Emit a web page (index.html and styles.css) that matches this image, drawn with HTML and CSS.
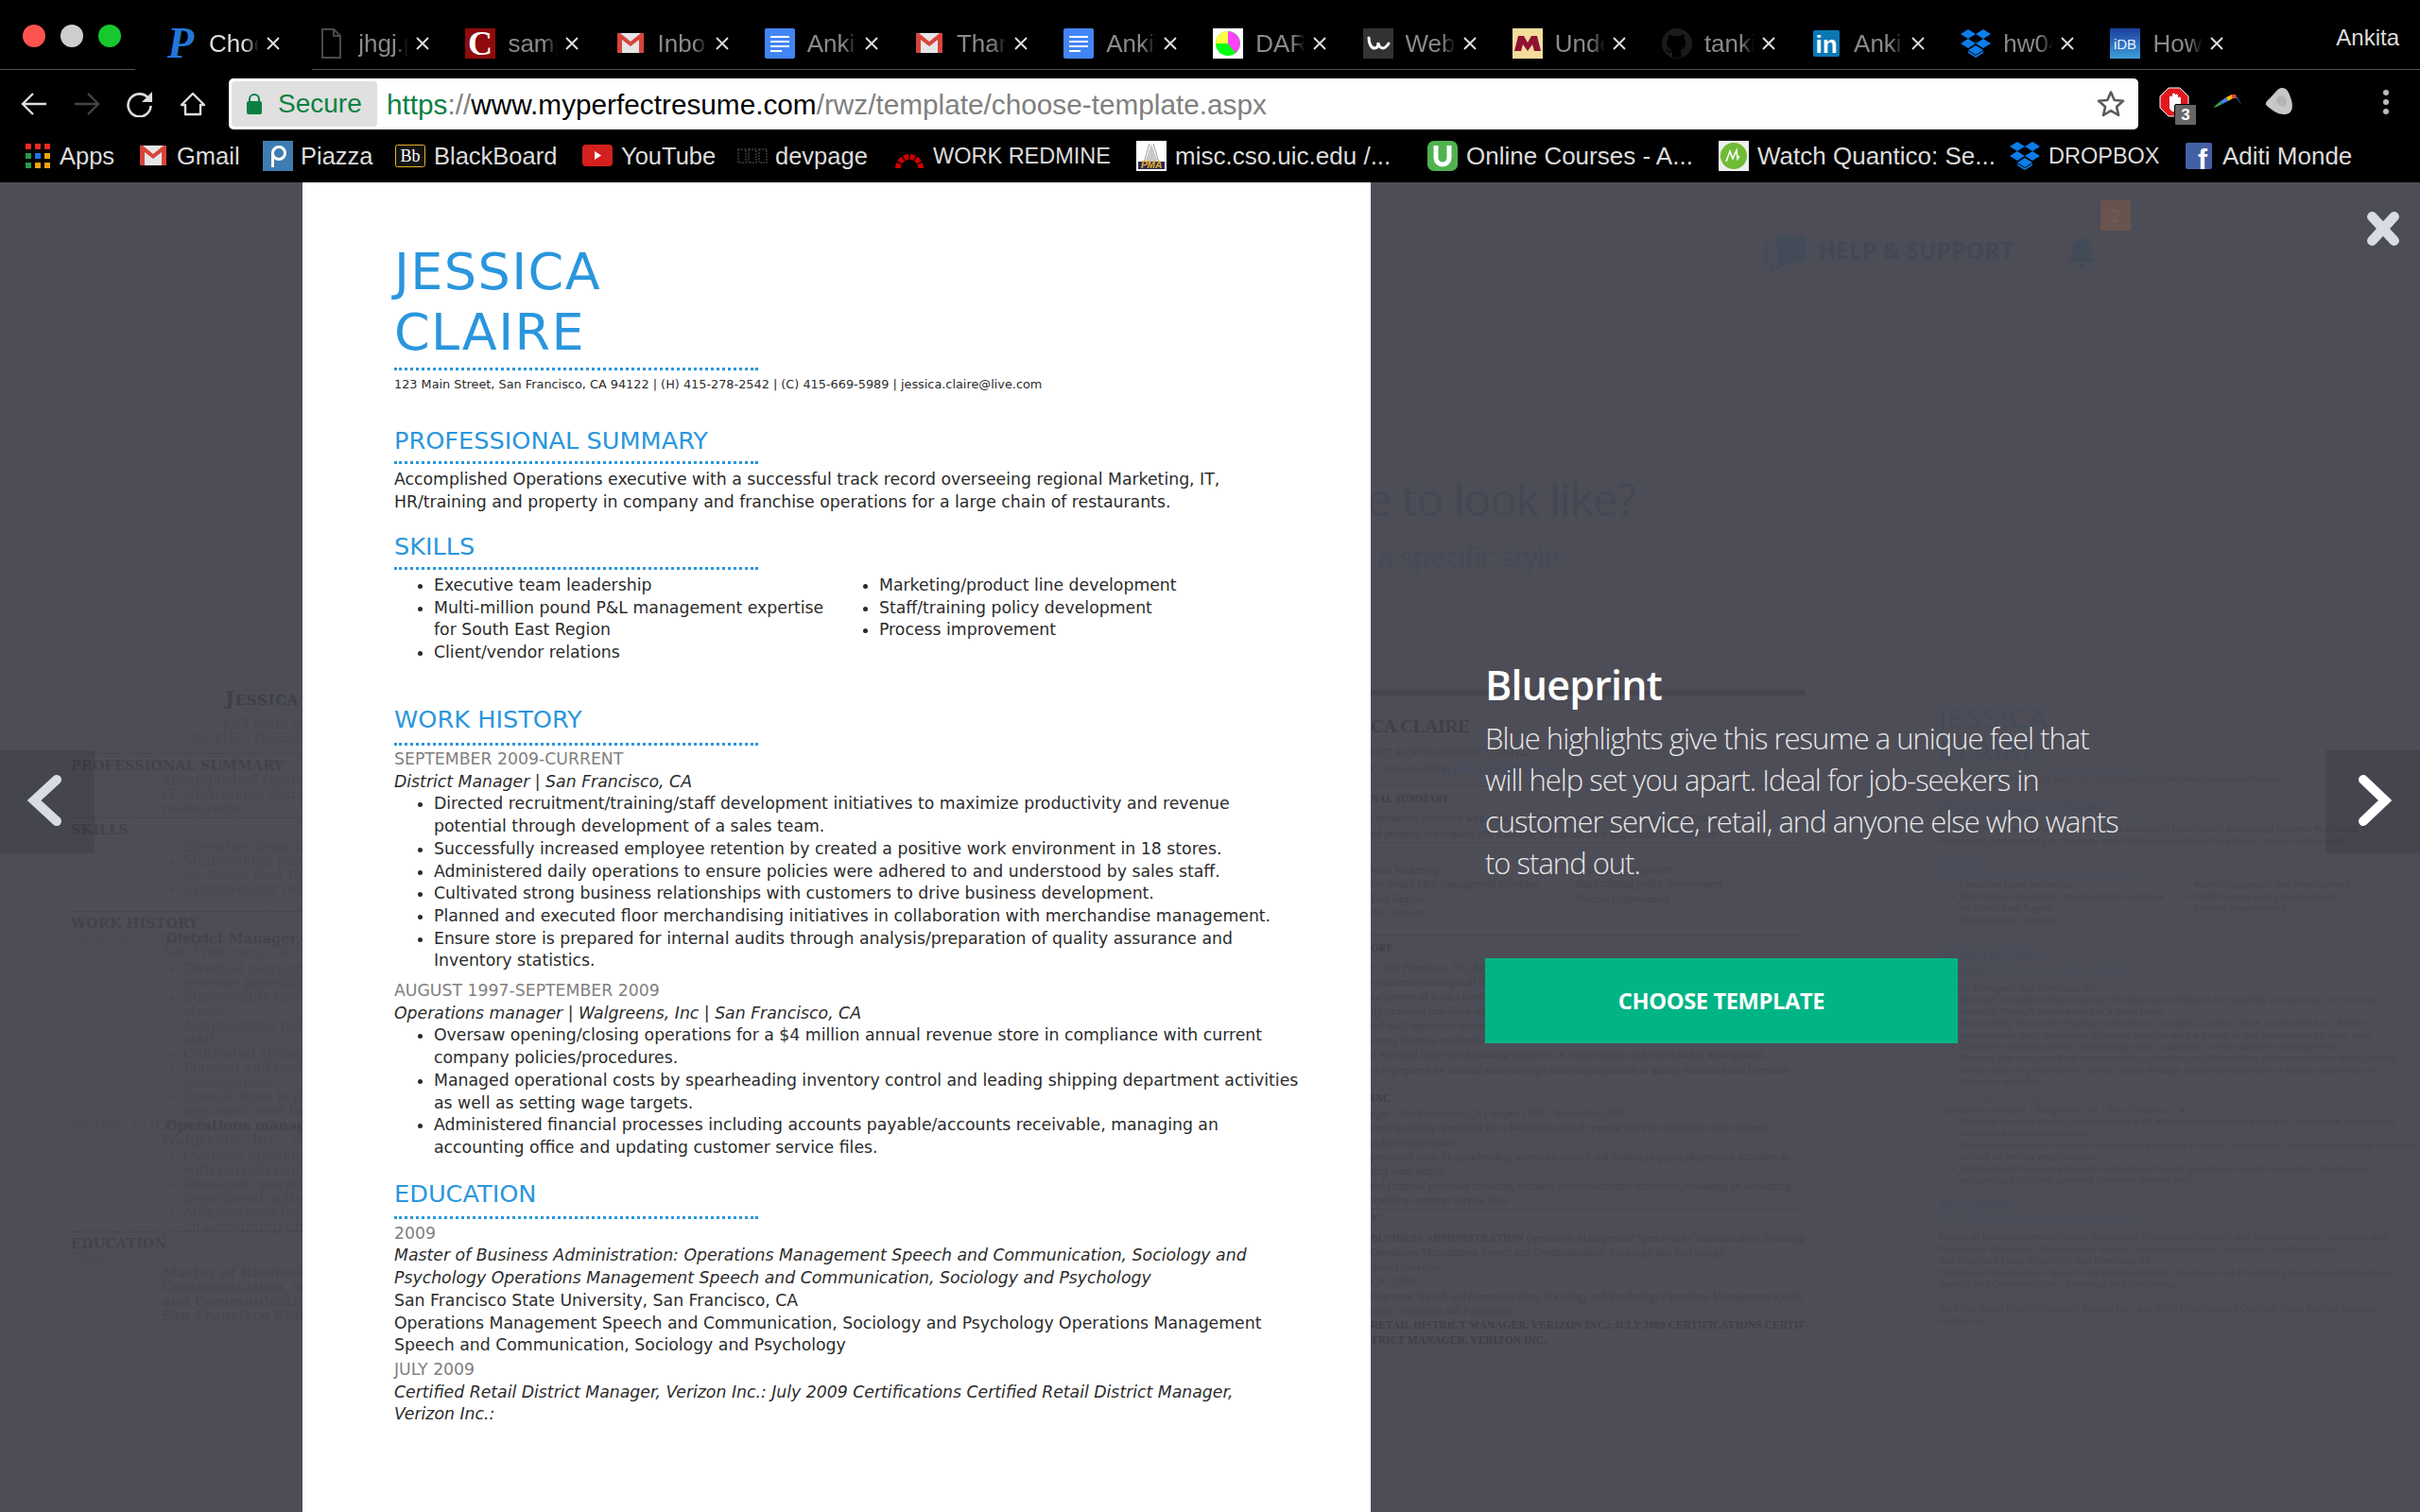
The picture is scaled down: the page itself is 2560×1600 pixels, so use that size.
FILE: index.html
```html
<!DOCTYPE html>
<html lang="en">
<head>
<meta charset="utf-8">
<title>Choose template</title>
<link rel="stylesheet" href="styles.css">
</head>
<body>
<svg class="defs" width="0" height="0" aria-hidden="true">
  <symbol id="i-gmail" viewBox="0 0 32 32">
    <rect x="2" y="5" width="28" height="21" rx="2" fill="#e6e6e6"/>
    <path d="M2 7a2 2 0 0 1 3-2l11 9 11-9a2 2 0 0 1 3 2v17a2 2 0 0 1-2 2h-3V12l-9 7-9-7v14H4a2 2 0 0 1-2-2z" fill="#d8443a"/>
  </symbol>
  <symbol id="i-docs" viewBox="0 0 32 32">
    <rect width="32" height="32" rx="2" fill="#4285f4"/>
    <path d="M6 8h20v2H6zM6 13h20v2H6zM6 18h20v2H6zM6 23h12v2H6z" fill="#fff"/>
  </symbol>
  <symbol id="i-dropbox" viewBox="0 0 32 32">
    <path d="M8 1l8 5-8 5-8-5zM24 1l8 5-8 5-8-5zM8 11l8 5-8 5-8-5zM24 11l8 5-8 5-8-5zM8 23l8-5 8 5-8 5z" fill="#0d7de8"/>
    <path d="M16 31l-8-5v-2l8 5 8-5v2z" fill="#0d7de8"/>
  </symbol>
  <symbol id="i-x" viewBox="0 0 16 16">
    <path d="M2 2l12 12M14 2L2 14" stroke="currentColor" stroke-width="1.8" fill="none"/>
  </symbol>
</svg>

<header class="chrome">
  <div class="tabstrip">
    <div class="lights"><i class="light red"></i><i class="light grey"></i><i class="light green"></i></div>
    <div class="tabs">
      <div class="tab active">
        <svg class="fav" viewBox="0 0 32 32"><text x="15" y="31" text-anchor="middle" class="fav-p">P</text></svg>
        <span class="tab-title">Choose</span><svg class="tab-x"><use href="#i-x"/></svg>
      </div>
      <div class="tab">
        <svg class="fav" viewBox="0 0 32 32"><path d="M7 1h12l7 7v23H7z M19 1v7h7" fill="none" stroke="#4a4a4a" stroke-width="2"/></svg>
        <span class="tab-title">jhgj.pdf</span><svg class="tab-x"><use href="#i-x"/></svg>
      </div>
      <div class="tab">
        <svg class="fav" viewBox="0 0 32 32"><rect width="32" height="32" fill="#8f0b0b"/><text x="16" y="28" text-anchor="middle" class="fav-c">C</text></svg>
        <span class="tab-title">sample</span><svg class="tab-x"><use href="#i-x"/></svg>
      </div>
      <div class="tab">
        <svg class="fav"><use href="#i-gmail"/></svg>
        <span class="tab-title">Inbox</span><svg class="tab-x"><use href="#i-x"/></svg>
      </div>
      <div class="tab">
        <svg class="fav"><use href="#i-docs"/></svg>
        <span class="tab-title">Ankita</span><svg class="tab-x"><use href="#i-x"/></svg>
      </div>
      <div class="tab">
        <svg class="fav"><use href="#i-gmail"/></svg>
        <span class="tab-title">Thank</span><svg class="tab-x"><use href="#i-x"/></svg>
      </div>
      <div class="tab">
        <svg class="fav"><use href="#i-docs"/></svg>
        <span class="tab-title">Ankita</span><svg class="tab-x"><use href="#i-x"/></svg>
      </div>
      <div class="tab">
        <svg class="fav" viewBox="0 0 32 32"><rect width="32" height="32" fill="#fff"/><circle cx="16" cy="16" r="13" fill="#00ff10"/><path d="M16 16V3A13 13 0 0 0 3 16z" fill="#ffff40"/><path d="M16 16V3a13 13 0 0 1 8 23z" fill="#ff40ff"/></svg>
        <span class="tab-title">DARwin</span><svg class="tab-x"><use href="#i-x"/></svg>
      </div>
      <div class="tab">
        <svg class="fav" viewBox="0 0 32 32"><rect width="32" height="32" fill="#333"/><path d="M6 10c0 7 3 11 6 11s4-3 4-6c0 3 2 6 5 6 2 0 4-2 6-5" fill="none" stroke="#fff" stroke-width="3" stroke-linecap="round"/></svg>
        <span class="tab-title">Web</span><svg class="tab-x"><use href="#i-x"/></svg>
      </div>
      <div class="tab">
        <svg class="fav" viewBox="0 0 32 32"><rect width="32" height="32" fill="#f3dc9c"/><path d="M2 24l4-16h6l4 7 4-7h6l4 16h-7l-2-7-5 7-5-7-2 7z" fill="#8f1233"/></svg>
        <span class="tab-title">Under</span><svg class="tab-x"><use href="#i-x"/></svg>
      </div>
      <div class="tab">
        <svg class="fav" viewBox="0 0 32 32"><circle cx="16" cy="16" r="16" fill="#1b1b1b"/><path d="M11 31v-6c-4 1-6-1-7-3 2 0 3 2 4 2 1 0 2 0 3-1-4-1-6-4-6-8 0-2 1-3 2-4-.5-1.500-.5-3 .2-4.500 1.500 0 3 1 4 1.800 3-.8 5-.8 8 0 1-.8 2.500-1.800 4-1.800.7 1.500.7 3 .2 4.500 1 1 2 2 2 4 0 4-2 7-6 8 1 1 1 2 1 3v5z" fill="#000"/></svg>
        <span class="tab-title">tankita</span><svg class="tab-x"><use href="#i-x"/></svg>
      </div>
      <div class="tab">
        <svg class="fav" viewBox="0 0 32 32"><rect x="2" y="2" width="28" height="28" rx="2" fill="#0a78b5"/><text x="16" y="26" text-anchor="middle" class="fav-in">in</text></svg>
        <span class="tab-title">Ankita</span><svg class="tab-x"><use href="#i-x"/></svg>
      </div>
      <div class="tab">
        <svg class="fav"><use href="#i-dropbox"/></svg>
        <span class="tab-title">hw04</span><svg class="tab-x"><use href="#i-x"/></svg>
      </div>
      <div class="tab">
        <svg class="fav" viewBox="0 0 32 32"><defs><linearGradient id="g-idb" x1="0" y1="0" x2="0" y2="1"><stop offset="0" stop-color="#1d3f9e"/><stop offset="1" stop-color="#3d9fd8"/></linearGradient></defs><rect width="32" height="32" fill="url(#g-idb)"/><text x="16" y="22" text-anchor="middle" class="fav-idb">iDB</text></svg>
        <span class="tab-title">How</span><svg class="tab-x"><use href="#i-x"/></svg>
      </div>
    </div>
    <span class="profile">Ankita</span>
  </div>

  <div class="toolbar">
    <div class="nav">
      <svg class="nav-i" viewBox="0 0 28 28"><path d="M27 14H3M13 3L2 14l11 11" fill="none" stroke="#ddd" stroke-width="2.400"/></svg>
      <svg class="nav-i" viewBox="0 0 28 28"><path d="M1 14h24M15 3l11 11-11 11" fill="none" stroke="#444" stroke-width="2.400"/></svg>
      <svg class="nav-i" viewBox="0 0 28 28"><path d="M23 8a12 12 0 1 0 2.500 8" fill="none" stroke="#ddd" stroke-width="2.600"/><path d="M27 1v11H16z" fill="#ddd"/></svg>
      <svg class="nav-i" viewBox="0 0 28 28"><path d="M14 3L2 15h4v10h16V15h4z" fill="none" stroke="#ddd" stroke-width="2.400" stroke-linejoin="round"/></svg>
    </div>
    <div class="omnibox">
      <div class="secure">
        <svg class="lock" viewBox="0 0 16 22"><path d="M3 9V6a5 5 0 0 1 10 0v3" fill="none" stroke="#0b8043" stroke-width="2"/><rect y="8" width="16" height="14" rx="2" fill="#0b8043"/></svg>
        <span>Secure</span>
      </div>
      <div class="url"><span class="u-green">https</span><span class="u-grey">://</span><span class="u-host">www.myperfectresume.com</span><span class="u-grey">/rwz/template/choose-template.aspx</span></div>
      <svg class="star" viewBox="0 0 30 30"><path d="M15 2.500l3.700 8.500 9.300.8-7 6.100 2.100 9.100-8.100-4.800-8 4.800 2.100-9.100-7-6.100 9.200-.8z" fill="none" stroke="#5a5a5a" stroke-width="2.600" stroke-linejoin="round"/></svg>
    </div>
    <div class="exts">
      <div class="ext-stop">
        <svg class="ext-stop-i" viewBox="0 0 32 32"><path d="M10 1h12l9 9v12l-9 9H10l-9-9V10z" fill="#e0191f" stroke="#fff" stroke-width="1"/><path d="M11 23V11a1.500 1.500 0 0 1 3 0V8a1.500 1.500 0 0 1 3 0v1a1.500 1.500 0 0 1 3 0v3a1.500 1.500 0 0 1 3 0v9l-3 5h-6z" fill="#fff"/></svg>
        <span class="ext-badge">3</span>
      </div>
      <svg class="ext-boom" viewBox="0 0 32 16"><path d="M1 15l8-7 2 3-6 3z" fill="#34a853"/><path d="M9 8l6-4 2 4-6 3z" fill="#4285f4"/><path d="M15 4l6-3 1 4-5 3z" fill="#fbbc05"/><path d="M21 1h4l1 4h-4z" fill="#ea4335"/><path d="M25 1l7 12-6-8z" fill="#1a6fb0"/></svg>
      <svg class="ext-blob" viewBox="0 0 30 30"><path d="M17 1c5 0 7 4 9 10 3 8 3 17-5 18-8 1-15-5-20-9-2-2-1-4 1-6C8 9 12 1 17 1z" fill="#c8c8c8"/><path d="M16 9c4 0 6 4 6 8s-3 5-6 3-5-3-5-5 2-6 5-6z" fill="#b4b4b4"/></svg>
      <div class="menu"><i></i><i></i><i></i></div>
    </div>
  </div>

  <nav class="bookmarks">
    <a class="bm bm-apps">
      <span class="apps-grid"><i class="c-r"></i><i class="c-r"></i><i class="c-r"></i><i class="c-g"></i><i class="c-b"></i><i class="c-y"></i><i class="c-g"></i><i class="c-y"></i><i class="c-y"></i></span>
      Apps</a>
    <a class="bm bm-gmail"><svg class="bm-i bm-i-gm"><use href="#i-gmail"/></svg>Gmail</a>
    <a class="bm bm-piazza"><svg class="bm-i" viewBox="0 0 32 32"><rect width="32" height="32" fill="#3e7cb1"/><circle cx="17" cy="13" r="6.500" fill="none" stroke="#fff" stroke-width="3"/><path d="M10.500 13v15" stroke="#fff" stroke-width="3"/></svg>Piazza</a>
    <a class="bm bm-bb"><svg class="bm-i bm-i-bb" viewBox="0 0 32 24"><rect x=".5" y=".5" width="31" height="23" rx="2" fill="#111" stroke="#e8b02c"/><text x="16" y="18" text-anchor="middle" class="fav-bb">Bb</text></svg>BlackBoard</a>
    <a class="bm bm-yt"><svg class="bm-i bm-i-yt" viewBox="0 0 32 24"><rect width="32" height="23" rx="4" fill="#d4201f"/><path d="M13 7l7 4.500-7 4.500z" fill="#fff"/></svg>YouTube</a>
    <a class="bm bm-dev"><svg class="bm-i bm-i-bb" viewBox="0 0 32 16"><g fill="none" stroke="#2e2e2e" stroke-width="2" stroke-dasharray="2 1"><rect x="1" y="1" width="8" height="14"/><rect x="12" y="1" width="8" height="14"/><rect x="23" y="1" width="8" height="14"/></g></svg>devpage</a>
    <a class="bm bm-caps bm-work"><svg class="bm-i" viewBox="0 0 32 26"><path d="M4 26a12 12 0 0 1 24 0" fill="none" stroke="#c00" stroke-width="6" stroke-dasharray="5 1.500"/></svg>WORK REDMINE</a>
    <a class="bm bm-long"><svg class="bm-i" viewBox="0 0 32 32"><rect width="32" height="32" fill="#fff"/><path d="M16 3l7 20H9z" fill="#c8c8c8"/><path d="M14 3l-6 20M18 3l6 20" stroke="#9c9c9c"/><rect x="2" y="22" width="28" height="8" fill="#2a2a55"/><text x="16" y="29" text-anchor="middle" class="fav-pma">PMA</text></svg>misc.cso.uic.edu /...</a>
    <a class="bm bm-long"><svg class="bm-i" viewBox="0 0 32 32"><rect width="32" height="32" rx="7" fill="#4fb24f"/><path d="M9 5v13a7 7 0 0 0 14 0V5" fill="none" stroke="#fff" stroke-width="5"/></svg>Online Courses - A...</a>
    <a class="bm bm-long"><svg class="bm-i" viewBox="0 0 32 32"><rect width="32" height="32" fill="#efefef"/><circle cx="16" cy="16" r="14" fill="#6fbb36"/><path d="M8 22l4-11 3 8 4-9 1 9 2-3" fill="none" stroke="#fff" stroke-width="1.600"/></svg>Watch Quantico: Se...</a>
    <a class="bm bm-caps bm-drop"><svg class="bm-i"><use href="#i-dropbox"/></svg>DROPBOX</a>
    <a class="bm bm-aditi"><svg class="bm-i bm-i-f" viewBox="0 0 28 28"><rect width="28" height="28" rx="2" fill="#4460a5"/><text x="18" y="28" text-anchor="middle" class="fav-f">f</text></svg>Aditi Monde</a>
  </nav>
</header>

<main class="stage">
  <!-- dim page behind the modal -->
  <div class="ghost-top">
    <svg class="g-chat" viewBox="0 0 42 40"><path d="M12 4a4 4 0 0 1 4-4h22a4 4 0 0 1 4 4v20a4 4 0 0 1-4 4H24L14 36V24z" fill="#444b58"/><path d="M8 10H2v20h6v8l10-8" fill="none" stroke="#444b58" stroke-width="2"/></svg>
    <span class="g-help">HELP &amp; SUPPORT</span>
    <svg class="g-bell" viewBox="0 0 32 32"><path d="M16 0c2 0 3 1 3 3 6 2 7 7 7 13 0 5 3 8 5 10H1c2-2 5-5 5-10C6 10 7 5 13 3c0-2 1-3 3-3zM12 28h8c0 2-2 4-4 4s-4-2-4-4z" fill="#434a58"/></svg>
    <span class="g-badge">2</span>
  </div>
  <div class="ghost-rule"></div>
  <div class="ghost-title">What do you want your resume to look like?</div>
  <div class="ghost-sub">Don't worry, you can pick a specific style.</div>

  <section class="slide-left">
    <div class="sl-name">Jessica Claire</div>
    <div class="sl-line sl-addr1">123 Main Street, San Francisco</div>
    <div class="sl-line sl-addr2">H: 415-278-2542 C: 415-669-5989</div>
    <div class="sl-rule sl-rule-first"></div>
    <div class="sl-h">PROFESSIONAL SUMMARY</div>
    <div class="sl-line sl-body">Accomplished Operations executive with</div>
    <div class="sl-line sl-body">IT, HR/training and property in company</div>
    <div class="sl-line sl-body">restaurants.</div>
    <div class="sl-rule"></div>
    <div class="sl-h">SKILLS</div>
    <ul class="sl-list">
      <li>Executive team leadership</li>
      <li>Multi-million pound P&amp;L management<br>for South East Region</li>
      <li>Client/vendor relations</li>
    </ul>
    <div class="sl-rule sl-rule-gap"></div>
    <div class="sl-h">WORK HISTORY</div>
    <div class="sl-row"><span class="sl-date">09/2009 to Current</span><b>District Manager,</b></div>
    <div class="sl-line sl-body"><em>San Francisco, CA</em></div>
    <ul class="sl-list">
      <li>Directed recruitment/training/staff<br>revenue potential through development</li>
      <li>Successfully increased employee retention<br>stores.</li>
      <li>Administered daily operations to ensure<br>staff.</li>
      <li>Cultivated strong business relationships</li>
      <li>Planned and executed floor merchandising<br>management.</li>
      <li>Ensure store is prepared for internal<br>assurance and Inventory statistics.</li>
    </ul>
    <div class="sl-row"><span class="sl-date">08/1997 to 09/2009</span><b>Operations manager,</b></div>
    <div class="sl-line sl-body"><b>Walgreens, Inc</b> – <em>San Francisco, CA</em></div>
    <ul class="sl-list">
      <li>Oversaw opening/closing operations for<br>with current company policies</li>
      <li>Managed operational costs by spearheading<br>department activities as well as setting</li>
      <li>Administered financial processes including<br>an accounting office and updating customer</li>
    </ul>
    <div class="sl-rule sl-rule-edu"></div>
    <div class="sl-h">EDUCATION</div>
    <div class="sl-row"><span class="sl-date">2009</span></div>
    <div class="sl-line sl-body"><b>Master of Business Administration</b></div>
    <div class="sl-line sl-body"><b>Communication, Sociology and</b></div>
    <div class="sl-line sl-body"><b>and Communication, Sociology</b></div>
    <div class="sl-line sl-body"><b><em>San Francisco State University</em></b></div>
  </section>

  <section class="slide-mid">
    <div class="top-bar"></div>
    <div class="m-name">CA CLAIRE</div>
    <div class="m-line m-gap">EET, SAN FRANCISCO, CA 94122</div>
    <div class="m-line m-gap2">C: 415-669-5989 | <span class="m-blue">jessica.claire@live.com</span></div>
    <div class="m-rule"></div>
    <div class="m-line m-bi">NAL SUMMARY</div>
    <div class="m-line m-gap3">Operations executive with a successful track record overseeing regional Marketing</div>
    <div class="m-line">nd property in company and franchise operations for a large chain of restaurants.</div>
    <div class="m-rule m-rule-tight"></div>
    <div class="m-cols">
      <div class="m-line">team leadership</div><div class="m-line m-c2">duct line development</div>
      <div class="m-line">ion pound P&amp;L management expertise</div><div class="m-line m-c2">Staff/training policy development</div>
      <div class="m-line">East Region</div><div class="m-line m-c2">Process improvement</div>
      <div class="m-line">dor relations</div><div class="m-line"></div>
    </div>
    <div class="m-rule m-rule-gap"></div>
    <div class="m-line m-bi">ORY</div>
    <div class="m-line m-gap3"><em>r | San Francisco, CA | September 2009 - Current</em></div>
    <div class="m-line">ecruitment/training/staff d</div>
    <div class="m-line">velopment of a sales team</div>
    <div class="m-line">lly increased employee rete</div>
    <div class="m-line">red daily operations to ens</div>
    <div class="m-line">strong business relationsh</div>
    <div class="m-line">d executed floor merchandising initiatives in collaboration with merchandise management.</div>
    <div class="m-line">re is prepared for internal audits through analysis/preparation of quality assurance and Inventory</div>
    <div class="m-line">&nbsp;</div>
    <div class="m-line m-b">INC</div>
    <div class="m-line"><em>ager | San Francisco, CA | August 1997 - September 2009</em></div>
    <div class="m-line">pening/closing operations for a $4 million annual revenue store in compliance with current</div>
    <div class="m-line">policies/procedures.</div>
    <div class="m-line">perational costs by spearheading inventory control and leading shipping department activities as</div>
    <div class="m-line">ting wage targets.</div>
    <div class="m-line">red financial processes including accounts payable/accounts receivable, managing an accounting</div>
    <div class="m-line">updating customer service files.</div>
    <div class="m-rule m-rule-hair"></div>
    <div class="m-line m-bi">Y</div>
    <div class="m-line m-gap3"><b>BUSINESS ADMINISTRATION</b> Operations Management Speech and Communication, Sociology</div>
    <div class="m-line">Operations Management Speech and Communication, Sociology and Psychology</div>
    <div class="m-line">State University</div>
    <div class="m-line">CA / 2009</div>
    <div class="m-line">nagement Speech and Communication, Sociology and Psychology Operations Management Speech</div>
    <div class="m-line">ation, Sociology and Psychology</div>
    <div class="m-line m-b">RETAIL DISTRICT MANAGER, VERIZON INC.; JULY 2009 CERTIFICATIONS CERTIFIED</div>
    <div class="m-line m-b">TRICT MANAGER, VERIZON INC.</div>
  </section>

  <section class="slide-right" aria-hidden="true">
    <div class="resume">
      <h1 class="r-name">JESSICA<br>CLAIRE</h1>
      <p class="r-contact">123 Main Street, San Francisco, CA 94122 | (H) 415-278-2542 | (C) 415-669-5989 | jessica.claire@live.com</p>
      <h2 class="r-h r-h-summary">PROFESSIONAL SUMMARY</h2>
      <p class="r-p">Accomplished Operations executive with a successful track record overseeing regional Marketing, IT, HR/training and property in company and franchise operations for a large chain of restaurants.</p>
      <h2 class="r-h r-h-skills">SKILLS</h2>
      <div class="r-skills">
        <ul class="r-ul"><li>Executive team leadership</li><li>Multi-million pound P&amp;L management expertise for South East Region</li><li>Client/vendor relations</li></ul>
        <ul class="r-ul"><li>Marketing/product line development</li><li>Staff/training policy development</li><li>Process improvement</li></ul>
      </div>
      <h2 class="r-h r-h-work">WORK HISTORY</h2>
      <p class="r-date">SEPTEMBER 2009-CURRENT</p>
      <p class="r-p r-it">District Manager | San Francisco, CA</p>
      <ul class="r-ul"><li>Directed recruitment/training/staff development initiatives to maximize productivity and revenue potential through development of a sales team.</li><li>Successfully increased employee retention by created a positive work environment in 18 stores.</li><li>Administered daily operations to ensure policies were adhered to and understood by sales staff.</li><li>Cultivated strong business relationships with customers to drive business development.</li><li>Planned and executed floor merchandising initiatives in collaboration with merchandise management.</li><li>Ensure store is prepared for internal audits through analysis/preparation of quality assurance and Inventory statistics.</li></ul>
      <p class="r-date r-date-gap">AUGUST 1997-SEPTEMBER 2009</p>
      <p class="r-p r-it">Operations manager | Walgreens, Inc | San Francisco, CA</p>
      <ul class="r-ul"><li>Oversaw opening/closing operations for a $4 million annual revenue store in compliance with current company policies/procedures.</li><li>Managed operational costs by spearheading inventory control and leading shipping department activities as well as setting wage targets.</li><li>Administered financial processes including accounts payable/accounts receivable, managing an accounting office and updating customer service files.</li></ul>
      <h2 class="r-h r-h-edu">EDUCATION</h2>
      <p class="r-date">2009</p>
      <p class="r-p r-it">Master of Business Administration: Operations Management Speech and Communication, Sociology and Psychology Operations Management Speech and Communication, Sociology and Psychology</p>
      <p class="r-p">San Francisco State University, San Francisco, CA</p>
      <p class="r-p">Operations Management Speech and Communication, Sociology and Psychology Operations Management Speech and Communication, Sociology and Psychology</p>
      <p class="r-date r-date-edu">JULY 2009</p>
      <p class="r-p r-it r-cert">Certified Retail District Manager, Verizon Inc.: July 2009 Certifications Certified Retail District Manager, Verizon Inc.:</p>
    </div>
  </section>

  <!-- modal -->
  <article class="sheet">
    <div class="resume">
      <h1 class="r-name">JESSICA<br>CLAIRE</h1>
      <p class="r-contact">123 Main Street, San Francisco, CA 94122 | (H) 415-278-2542 | (C) 415-669-5989 | jessica.claire@live.com</p>
      <h2 class="r-h r-h-summary">PROFESSIONAL SUMMARY</h2>
      <p class="r-p">Accomplished Operations executive with a successful track record overseeing regional Marketing, IT, HR/training and property in company and franchise operations for a large chain of restaurants.</p>
      <h2 class="r-h r-h-skills">SKILLS</h2>
      <div class="r-skills">
        <ul class="r-ul"><li>Executive team leadership</li><li>Multi-million pound P&amp;L management expertise for South East Region</li><li>Client/vendor relations</li></ul>
        <ul class="r-ul"><li>Marketing/product line development</li><li>Staff/training policy development</li><li>Process improvement</li></ul>
      </div>
      <h2 class="r-h r-h-work">WORK HISTORY</h2>
      <p class="r-date">SEPTEMBER 2009-CURRENT</p>
      <p class="r-p r-it">District Manager | San Francisco, CA</p>
      <ul class="r-ul"><li>Directed recruitment/training/staff development initiatives to maximize productivity and revenue potential through development of a sales team.</li><li>Successfully increased employee retention by created a positive work environment in 18 stores.</li><li>Administered daily operations to ensure policies were adhered to and understood by sales staff.</li><li>Cultivated strong business relationships with customers to drive business development.</li><li>Planned and executed floor merchandising initiatives in collaboration with merchandise management.</li><li>Ensure store is prepared for internal audits through analysis/preparation of quality assurance and Inventory statistics.</li></ul>
      <p class="r-date r-date-gap">AUGUST 1997-SEPTEMBER 2009</p>
      <p class="r-p r-it">Operations manager | Walgreens, Inc | San Francisco, CA</p>
      <ul class="r-ul"><li>Oversaw opening/closing operations for a $4 million annual revenue store in compliance with current company policies/procedures.</li><li>Managed operational costs by spearheading inventory control and leading shipping department activities as well as setting wage targets.</li><li>Administered financial processes including accounts payable/accounts receivable, managing an accounting office and updating customer service files.</li></ul>
      <h2 class="r-h r-h-edu">EDUCATION</h2>
      <p class="r-date">2009</p>
      <p class="r-p r-it">Master of Business Administration: Operations Management Speech and Communication, Sociology and Psychology Operations Management Speech and Communication, Sociology and Psychology</p>
      <p class="r-p">San Francisco State University, San Francisco, CA</p>
      <p class="r-p">Operations Management Speech and Communication, Sociology and Psychology Operations Management Speech and Communication, Sociology and Psychology</p>
      <p class="r-date r-date-edu">JULY 2009</p>
      <p class="r-p r-it r-cert">Certified Retail District Manager, Verizon Inc.: July 2009 Certifications Certified Retail District Manager, Verizon Inc.:</p>
    </div>
  </article>

  <aside class="info">
    <h2 class="info-title">Blueprint</h2>
    <p class="info-text">Blue highlights give this resume a unique feel that will help set you apart. Ideal for job-seekers in customer service, retail, and anyone else who wants to stand out.</p>
    <button class="choose">CHOOSE TEMPLATE</button>
  </aside>

  <button class="arrow arrow-prev" aria-label="Previous"><svg viewBox="0 0 36 54"><path d="M31 5L7 27l24 22" fill="none" stroke="#d8dce3" stroke-width="10" stroke-linejoin="miter" stroke-linecap="round"/></svg></button>
  <button class="arrow arrow-next" aria-label="Next"><svg viewBox="0 0 36 54"><path d="M6 5l23 22L6 49" fill="none" stroke="#fff" stroke-width="10" stroke-linejoin="miter" stroke-linecap="round"/></svg></button>
  <button class="close" aria-label="Close"><svg viewBox="0 0 34 34"><path d="M6 5l22 24M28 5L6 29" stroke="#d8dce3" stroke-width="10" stroke-linecap="round" fill="none"/></svg></button>
</main>
</body>
</html>
```

FILE: styles.css
```css
* { box-sizing: border-box; }
html, body { margin: 0; height: 100%; }
body {
  width: 2560px; height: 1600px; overflow: hidden;
  display: flex; flex-direction: column;
  background: #000;
  font-family: "Liberation Sans", Arial, sans-serif;
}
.defs { position: absolute; }

/* ---------- browser chrome ---------- */
.chrome { height: 193px; flex: none; background: #000; display: flex; flex-direction: column; }
.tabstrip { height: 74px; flex: none; display: flex; position: relative;
  background: linear-gradient(to right, #555 143px, #000 143px, #000 330px, #555 330px) bottom / 100% 1px no-repeat; }
.lights { position: absolute; left: 24px; top: 26px; display: flex; gap: 16px; }
.light { width: 24px; height: 24px; border-radius: 50%; display: block; }
.light.red { background: #ff5350; }
.light.grey { background: #cdcdcd; }
.light.green { background: #16c72e; }
.tabs { display: flex; padding: 30px 0 0 176px; }
.tab { width: 158.2px; height: 32px; display: flex; align-items: center; flex: none; }
.fav { width: 32px; height: 32px; flex: none; }
.tab-title {
  width: 55px; margin-left: 13px; overflow: hidden; white-space: nowrap;
  font-size: 26px; line-height: 32px; color: #8a8a8a;
  -webkit-mask-image: linear-gradient(to right, #000 70%, transparent 96%);
  mask-image: linear-gradient(to right, #000 70%, transparent 96%);
}
.tab.active .tab-title { color: #ddd; }
.tab-x { width: 16px; height: 16px; margin-left: 5px; color: #e4e4e4; flex: none; }
.profile { position: absolute; right: 22px; top: 25px; font-size: 24px; line-height: 30px; color: #ddd; }
.fav-p { font: italic bold 46px "Liberation Serif", serif; fill: #2277d8; }
.fav-c { font: bold 36px "Liberation Serif", serif; fill: #fff; }
.fav-in { font: bold 26px "Liberation Sans", sans-serif; fill: #fff; }
.fav-idb { font: 15px "Liberation Sans", sans-serif; fill: #e8f2ff; }
.fav-bb { font: 18px "Liberation Serif", serif; fill: #fff; }
.fav-pma { font: italic bold 10px "Liberation Sans", sans-serif; fill: #e8b02c; }
.fav-f { font: bold 30px "Liberation Sans", sans-serif; fill: #fff; }

.toolbar { height: 66px; flex: none; display: flex; align-items: flex-start; padding: 9px 0 0 22px; }
.nav { display: flex; gap: 28px; width: 220px; flex: none; padding-top: 13px; }
.nav-i { width: 28px; height: 28px; flex: none; }
.omnibox { width: 2020px; height: 54px; background: #fff; border-radius: 5px; display: flex; align-items: center; padding: 3px; flex: none; }
.secure { width: 154px; height: 48px; background: #e0e0e0; border-radius: 4px; display: flex; align-items: center; padding-left: 16px; gap: 17px; color: #0b8043; font-size: 28px; flex: none; }
.lock { width: 16px; height: 22px; flex: none; }
.url { margin-left: 10px; padding-top: 1px; font-size: 29.750px; white-space: nowrap; flex: 1; color: #000; }
.u-green { color: #0b8043; }
.u-grey { color: #808080; }
.u-host { color: #000; }
.star { width: 30px; height: 30px; margin-right: 11px; flex: none; }
.exts { position: relative; flex: 1; height: 54px; display: flex; align-items: center; padding-left: 22px; }
.ext-stop { position: relative; width: 32px; height: 32px; flex: none; margin-top: -4px; }
.ext-stop-i { width: 32px; height: 32px; display: block; }
.ext-badge { position: absolute; left: 16px; top: 18px; width: 24px; height: 23px; background: #666; border: 1px solid #000; border-radius: 2px; color: #fff; font: bold 17px/22px "Liberation Sans", sans-serif; text-align: center; }
.ext-boom { width: 32px; height: 16px; margin-left: 24px; flex: none; margin-top: -6px; }
.ext-blob { width: 30px; height: 30px; margin-left: 25px; flex: none; margin-top: -6px; }
.menu { display: flex; flex-direction: column; gap: 4px; margin-left: 94px; margin-top: -4px; }
.menu i { width: 6px; height: 6px; border-radius: 50%; background: #bbb; display: block; }

.bookmarks { height: 53px; flex: none; display: flex; align-items: center; padding: 0 0 3px 27px; color: #ddd; font-size: 25.500px; white-space: nowrap; }
.bm { display: flex; align-items: center; gap: 9px; flex: none; }
.bm-apps { gap: 10px; width: 121px; }
.bm-gmail { width: 130px; }
.bm-piazza { width: 140px; gap: 8px; }
.bm-bb { width: 198px; }
.bm-yt { width: 164px; }
.bm-dev { width: 166px; gap: 8px; }
.bm-work { width: 256px; }
.bm-long { width: 308px; font-size: 26px; }
.bm-drop { width: 186px; }
.bm-aditi { font-size: 26px; gap: 11px; }
.bm-caps { font-size: 23.500px; }
.bm-i { width: 32px; height: 32px; flex: none; }
.bm-i-gm { margin-left: -2px; }
.bm-i-bb { width: 32px; height: 24px; }
.bm-i-yt { width: 32px; height: 24px; }
.bm-i-f { width: 28px; height: 28px; }
.apps-grid { display: grid; grid-template-columns: repeat(3, 6px); gap: 4px; }
.apps-grid i { width: 6px; height: 6px; display: block; }
.c-r { background: #ea2a22; } .c-g { background: #2a9a4a; } .c-b { background: #1a73e8; } .c-y { background: #f2a20c; }

/* ---------- stage ---------- */
.stage { position: relative; flex: 1; overflow: hidden; background: #4d4d57; display: flex; }

.ghost-rule { position: absolute; left: 0; right: 0; top: 232px; height: 1px; background: #4a4a54; }
.ghost-top { position: absolute; inset: 0; }
.g-chat { position: absolute; left: 1866px; top: 55px; width: 44px; height: 42px; }
.g-help { position: absolute; left: 1923px; top: 55px; font: bold 25px/32px "Open Sans", sans-serif; color: #424955; white-space: nowrap; letter-spacing: -.2px; }
.g-bell { position: absolute; left: 2186px; top: 58px; width: 32px; height: 32px; }
.g-badge { position: absolute; left: 2222px; top: 19px; width: 32px; height: 32px; background: #69534f; color: #745c58; font: 18px/32px "Open Sans", sans-serif; text-align: center; }
.ghost-title { position: absolute; right: 830px; top: 305px; font: 400 47.500px/60px "Open Sans", sans-serif; letter-spacing: -1px; color: #444853; white-space: nowrap; }
.ghost-sub { position: absolute; right: 903px; top: 376px; font: 400 30px/40px "Open Sans", sans-serif; letter-spacing: -.5px; color: #464a55; white-space: nowrap; }

.slide-left { position: absolute; left: 75px; top: 524px; width: 260px; overflow: hidden; height: 880px; font: 14.500px/15px "DejaVu Serif", serif; color: #484852; white-space: nowrap; }
.sl-line { height: 15px; }
.sl-name { margin: 10px 0 0 163px; font: bold 21px/24px "DejaVu Serif", serif; font-variant: small-caps; letter-spacing: .7px; color: #3f3f48; }
.sl-addr1 { margin: 8px 0 0 160px; }
.sl-addr2 { margin: 0 0 0 127px; }
.sl-rule { border-top: 1px dotted #3f3f48; margin: 2px 0 0; height: 5px; }
.sl-rule-first { margin-top: 8px; }
.sl-rule-gap { margin-top: 15px; }
.sl-rule-edu { margin-top: -3px; }
.sl-h { font-weight: bold; color: #42424b; height: 16px; }
.sl-body { margin-left: 96px; }
.sl-list { margin: 3px 0 0 96px; padding: 0 0 0 23px; }
.sl-list li { line-height: 15px; }
.sl-row { height: 15px; display: flex; color: #494953; }
.sl-row b { margin-left: 9px; color: #43434c; }
.sl-date { width: 91px; color: #4a4a54; }

.slide-mid { position: absolute; left: 1450px; top: 537px; width: 460px; font: 11.500px/15.400px "Liberation Serif", serif; color: #44444d; white-space: nowrap; overflow: hidden; }
.top-bar { height: 6px; background: #45454e; }
.m-name { font: bold 19px/24px "Liberation Serif", serif; margin-top: 21px; color: #3f3f48; }
.m-line { height: 15.4px; }
.m-gap { margin-top: 8px; }
.m-gap2 { margin-top: 3px; }
.m-gap3 { margin-top: 6px; }
.m-blue { color: #414c63; }
.m-rule { border-top: 1px solid #47474f; margin-top: 8px; height: 7px; }
.m-rule-tight { margin-top: 1px; height: 22px; }
.m-rule-gap { margin-top: 14px; }
.m-rule-hair { margin-top: 0; height: 3px; }
.m-bi { font-weight: bold; font-style: italic; color: #3f3f48; }
.m-b { font-weight: bold; color: #3f3f48; }
.m-cols { display: grid; grid-template-columns: 217px 1fr; }
.m-c2 { margin-left: 0; }

.slide-right { position: absolute; left: 2000px; top: 519px; width: 1130px; transform: scale(.526); transform-origin: 0 0; opacity: .13; }
.slide-right .resume { color: #111; }
.slide-right .r-name, .slide-right .r-h { color: #084575; border-color: #084575; }
.slide-right .r-date { color: #333; }

/* ---------- modal sheet ---------- */
.sheet { position: relative; flex: none; margin-left: 320px; width: 1130px; background: #fff; }
.resume { padding: 63px 75px 0 97px; font-family: "DejaVu Sans", Verdana, sans-serif; color: #2b2b2b; font-size: 17.300px; line-height: 23.7px; }
.r-name { margin: 0; font-size: 54px; letter-spacing: 1.4px; line-height: 64px; font-weight: normal; color: #2a96dd; padding-bottom: 5px; width: 385px; border-bottom: 3px dotted #2a96dd; }
.r-contact { margin: 5px 0 0; font-size: 12.850px; line-height: 20px; }
.r-h { width: 385px; font-size: 25.600px; line-height: 32px; font-weight: normal; color: #2a96dd; border-bottom: 3px dotted #2a96dd; padding-bottom: 6px; }
.r-h-summary { margin: 33px 0 5px; }
.r-h-skills { margin: 19px 0 5px; }
.r-h-work { margin: 43px 0 3px; padding-bottom: 9px; }
.r-h-edu { margin: 20px 0 4px; padding-bottom: 8px; }
.r-p { margin: 0; }
.r-it { font-style: italic; }
.r-cert { max-width: 930px; }
.r-date { margin: 0; color: #808080; }
.r-date-gap { margin-top: 8px; }
.r-date-edu { margin-top: 2px; }
.r-skills { display: grid; grid-template-columns: 471px 1fr; line-height: 23.4px; }
.r-ul { margin: 0; padding: 0 0 0 42px; }

/* ---------- info panel ---------- */
.info { flex: 1; position: relative; padding: 507px 0 0 121px; }
.info-title { margin: 0; font: 600 43px/50px "Open Sans", sans-serif; color: #fff; letter-spacing: -.8px; }
.info-text { margin: 9px 0 0; width: 680px; font: 300 31px/44px "Open Sans", sans-serif; color: #e6e6e6; letter-spacing: -1px; }
.choose { display: block; margin-top: 79px; width: 500px; height: 90px; border: 0; background: #00b485; color: #fff; font: 700 23.700px/90px "Open Sans", sans-serif; letter-spacing: -.4px; padding: 0; }

.arrow { position: absolute; top: 601px; width: 100px; height: 109px; border: 0; padding: 0; background: rgba(0,0,0,.1); display: flex; align-items: center; justify-content: center; }
.arrow svg { width: 36px; height: 54px; display: block; }
.arrow-prev { left: 0; padding: 0 6px 3px 0; }
.arrow-next { right: 0; padding: 0 0 3px 4px; }
.close { position: absolute; right: 21px; top: 31px; width: 36px; height: 36px; padding: 0; border: 0; background: none; }
.close svg { width: 100%; height: 100%; display: block; }
```
